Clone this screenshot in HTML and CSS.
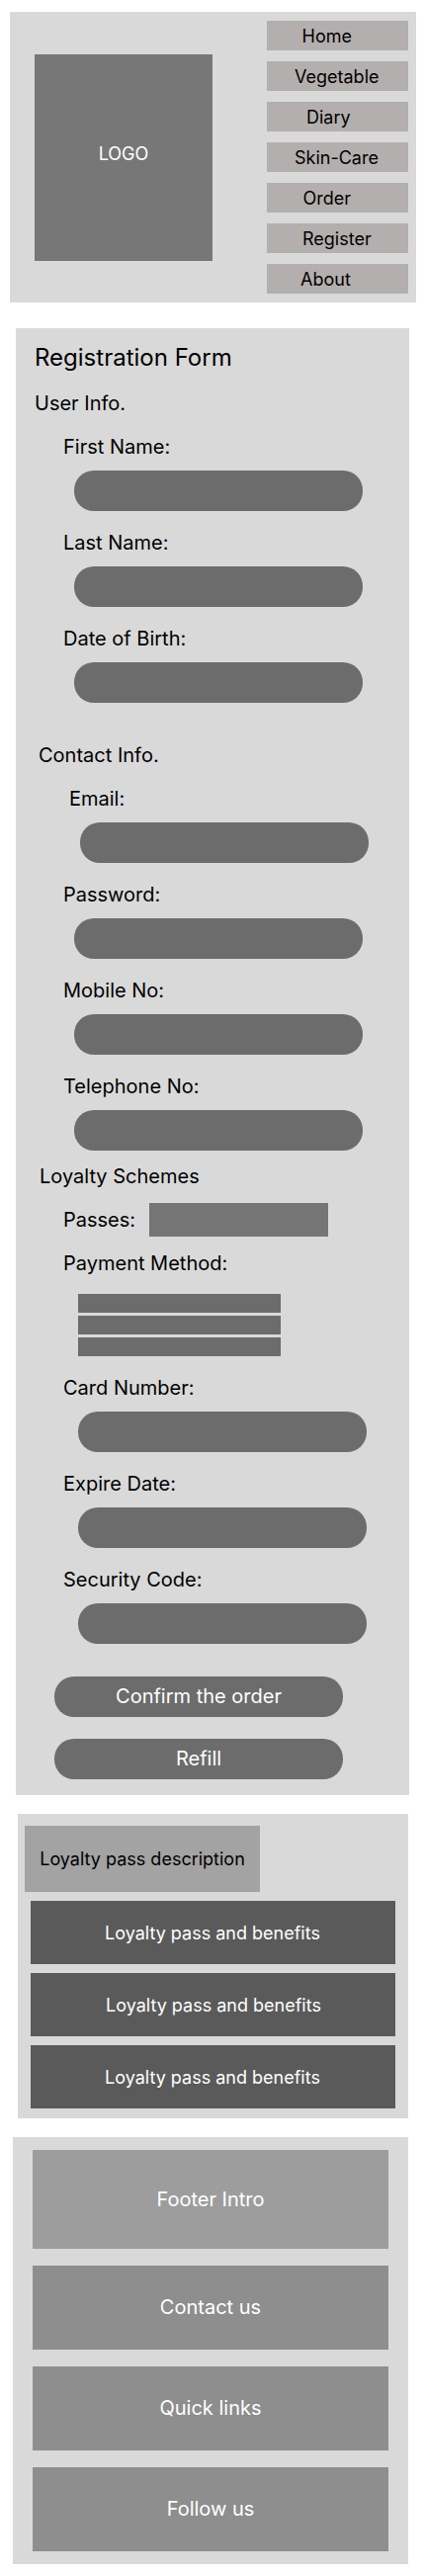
FILE: index.html
```html
<!DOCTYPE html>
<html lang="en">
<head>
<meta charset="utf-8">
<title>Registration</title>
<link rel="stylesheet" href="styles.css">
</head>
<body>
<header class="header">
  <div class="logo">LOGO</div>
  <nav class="nav">
    <a class="nav-item nav-home">Home</a>
    <a class="nav-item nav-vegetable">Vegetable</a>
    <a class="nav-item nav-diary">Diary</a>
    <a class="nav-item nav-skin">Skin-Care</a>
    <a class="nav-item nav-order">Order</a>
    <a class="nav-item nav-register">Register</a>
    <a class="nav-item nav-about">About</a>
  </nav>
</header>

<main class="form">
  <h1 class="title">Registration Form</h1>
  <h2 class="section user">User Info.</h2>
  <div class="fields">
    <div class="field"><div class="label">First Name:</div><div class="input"></div></div>
    <div class="field"><div class="label">Last Name:</div><div class="input"></div></div>
    <div class="field"><div class="label">Date of Birth:</div><div class="input"></div></div>
  </div>
  <h2 class="section contact">Contact Info.</h2>
  <div class="fields">
    <div class="field email"><div class="label">Email:</div><div class="input"></div></div>
    <div class="field"><div class="label">Password:</div><div class="input"></div></div>
    <div class="field"><div class="label">Mobile No:</div><div class="input"></div></div>
    <div class="field"><div class="label">Telephone No:</div><div class="input"></div></div>
  </div>
  <h2 class="section loyalty">Loyalty Schemes</h2>
  <div class="passes"><div class="label">Passes:</div><div class="select"></div></div>
  <div class="payment">
    <div class="label">Payment Method:</div>
    <div class="methods"><div class="method"></div><div class="method"></div><div class="method"></div></div>
  </div>
  <div class="fields card">
    <div class="field"><div class="label">Card Number:</div><div class="input"></div></div>
    <div class="field"><div class="label">Expire Date:</div><div class="input"></div></div>
    <div class="field"><div class="label">Security Code:</div><div class="input"></div></div>
  </div>
  <div class="actions">
    <div class="button">Confirm the order</div>
    <div class="button">Refill</div>
  </div>
</main>

<section class="benefits">
  <div class="description">Loyalty pass description</div>
  <div class="benefit">Loyalty pass and benefits</div>
  <div class="benefit benefit-middle">Loyalty pass and benefits</div>
  <div class="benefit">Loyalty pass and benefits</div>
</section>

<footer class="footer">
  <div class="footer-box intro">Footer Intro</div>
  <div class="footer-box">Contact us</div>
  <div class="footer-box">Quick links</div>
  <div class="footer-box">Follow us</div>
</footer>
</body>
</html>
```
FILE: styles.css
```css
* {
  box-sizing: border-box;
}

body {
  margin: 0;
  padding-top: 12px;
  height: 2606px;
  background: #fff;
  color: #000;
  font-family: Inter, "Liberation Sans", sans-serif;
  font-size: 20px;
  line-height: 24px;
}

h1,
h2 {
  margin: 0;
  font-weight: 400;
}

.header {
  display: flex;
  justify-content: space-between;
  width: 411px;
  height: 294px;
  margin-left: 10px;
  padding: 9px 8px 0 25px;
  background: #d9d9d9;
  font-size: 18px;
  line-height: 22px;
}

.logo {
  display: flex;
  align-items: center;
  justify-content: center;
  width: 180px;
  height: 209px;
  margin-top: 34px;
  padding-bottom: 7px;
  background: #777;
  color: #fff;
}

.nav {
  display: flex;
  flex-direction: column;
  gap: 11px;
  width: 143px;
}

.nav-item {
  height: 30px;
  padding-top: 5px;
  background: #b3afae;
}

.nav-home { padding-left: 35.5px; }
.nav-vegetable { padding-left: 28px; }
.nav-diary { padding-left: 40px; }
.nav-skin { padding-left: 28px; }
.nav-order { padding-left: 36.5px; }
.nav-register { padding-left: 36px; }
.nav-about { padding-left: 34px; }

.form {
  width: 398px;
  height: 1484px;
  margin: 26px 0 0 16px;
  padding-top: 15px;
  background: #d9d9d9;
}

.title {
  padding-left: 19px;
  font-size: 24px;
  line-height: 29px;
}

.section {
  font-size: 20px;
}

.user {
  margin: 20px 0 20px 19px;
}

.contact {
  margin: 41px 0 20px 23px;
}

.loyalty {
  margin: 14px 0 0 24px;
}

.fields {
  display: flex;
  flex-direction: column;
  gap: 20px;
  padding-left: 48px;
}

.input {
  width: 292px;
  height: 41px;
  margin: 12px 0 0 11px;
  border-radius: 20px;
  background: #6c6c6c;
}

.email {
  padding-left: 6px;
}

.passes {
  display: flex;
  align-items: center;
  margin: 15px 0 0 48px;
}

.passes .label {
  width: 87px;
}

.select {
  width: 181px;
  height: 34px;
  background: #757575;
}

.payment {
  margin: 15px 0 20px 48px;
}

.methods {
  display: flex;
  flex-direction: column;
  gap: 3px;
  margin: 19px 0 0 15px;
}

.method {
  width: 205px;
  height: 19px;
  background: #6c6c6c;
}

.card .input {
  margin-left: 15px;
}

.actions {
  display: flex;
  flex-direction: column;
  gap: 22px;
  margin: 33px 0 0 39px;
}

.button {
  width: 292px;
  height: 41px;
  padding-top: 8px;
  border-radius: 20px;
  background: #6c6c6c;
  color: #fff;
  text-align: center;
}

.benefits {
  display: flex;
  flex-direction: column;
  gap: 9px;
  width: 395px;
  height: 308px;
  margin: 19px 0 0 18px;
  padding: 12px 13px 0;
  background: #d9d9d9;
  font-size: 18px;
  line-height: 22px;
}

.description {
  width: 238px;
  height: 67px;
  margin-left: -6px;
  padding-top: 23px;
  background: #a3a3a3;
  text-align: center;
}

.benefit {
  height: 64px;
  padding: 22px 1px 0 0;
  background: #5a5a5a;
  color: #fff;
  text-align: center;
}

.benefit-middle {
  padding: 22px 0 0 1px;
}

.footer {
  display: flex;
  flex-direction: column;
  gap: 17px;
  width: 400px;
  height: 432px;
  margin: 19px 0 0 13px;
  padding: 13px 20px 0;
  background: #d9d9d9;
}

.footer-box {
  height: 85px;
  padding-top: 30px;
  background: #8e8e8e;
  color: #fff;
  text-align: center;
}

.intro {
  height: 100px;
  padding-top: 38px;
  background: #9d9d9d;
}
```
